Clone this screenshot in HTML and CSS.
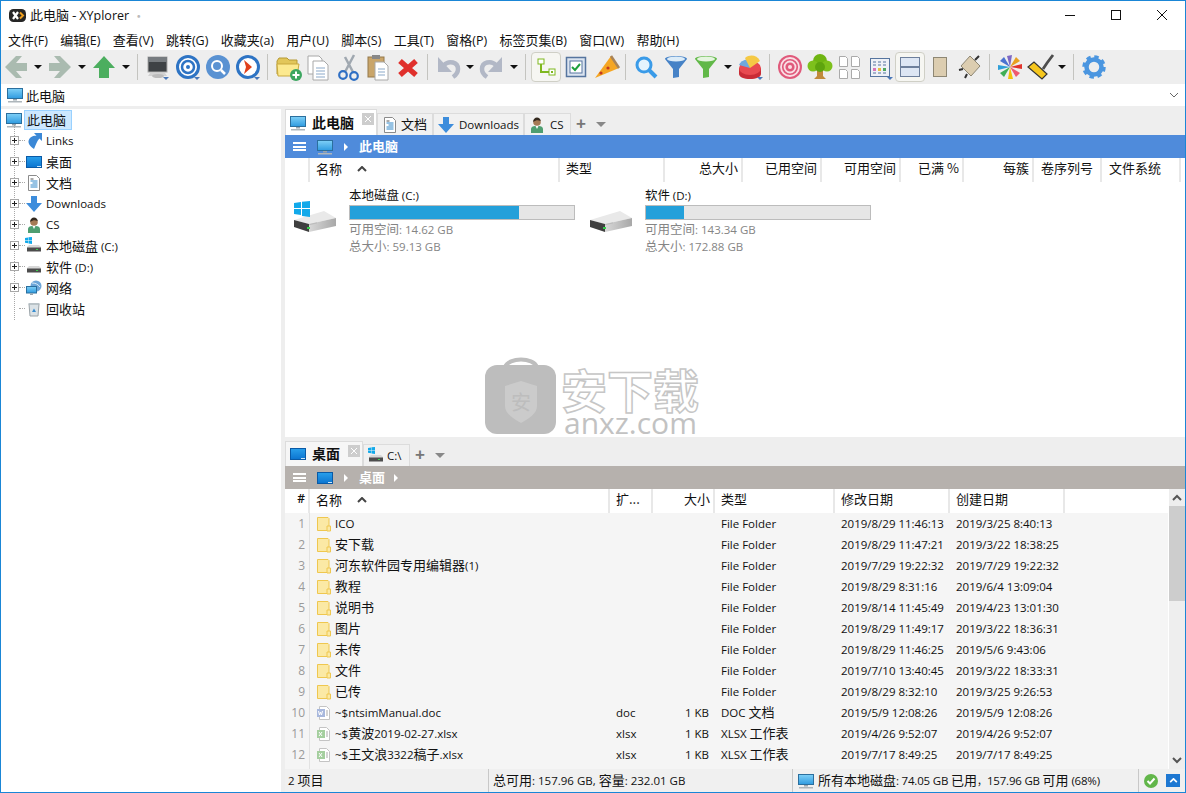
FILE: index.html
```html
<!DOCTYPE html>
<html lang="zh">
<head>
<meta charset="utf-8">
<title>XYplorer</title>
<link rel="stylesheet" href="styles.css">
</head>
<body>
<svg class="defs" width="0" height="0">
  <defs>
    <linearGradient id="scr" x1="0" y1="0" x2="0" y2="1"><stop offset="0" stop-color="#7fd0f7"/><stop offset="1" stop-color="#2f9be0"/></linearGradient>
    <linearGradient id="desk" x1="0" y1="0" x2="0" y2="1"><stop offset="0" stop-color="#29a0ec"/><stop offset="1" stop-color="#0b74d0"/></linearGradient>
    <linearGradient id="hdd" x1="0" y1="0" x2="1" y2="0"><stop offset="0" stop-color="#d8d8d8"/><stop offset="1" stop-color="#a8a8a8"/></linearGradient>
    <symbol id="pc" viewBox="0 0 16 16"><rect x="0.5" y="1.5" width="15" height="10" fill="url(#scr)" stroke="#2b6f9e"/><rect x="6" y="12" width="4" height="1.5" fill="#9aa5ad"/><rect x="1" y="14" width="14" height="1.5" fill="#aeb6bb"/></symbol>
    <symbol id="desktop" viewBox="0 0 16 16"><rect x="0.5" y="2.5" width="15" height="11" fill="url(#desk)" stroke="#0a5aa6"/><rect x="11" y="12" width="4" height="1" fill="#cfe8fa"/></symbol>
    <symbol id="doc" viewBox="0 0 16 16"><path d="M2.5.5h8l3 3v12h-11z" fill="#fff" stroke="#8b8b8b"/><path d="M4.500 6h7M6.500 8h5M4.500 10h7M4.500 12h7" stroke="#2f86c8"/><path d="M4.500 4h3" stroke="#555"/></symbol>
    <symbol id="down" viewBox="0 0 16 16"><path d="M5 0h6v7h5l-8 9-8-9h5z" fill="#3d8ddc"/></symbol>
    <symbol id="user" viewBox="0 0 16 16"><path d="M2 16v-4c0-2 2-3 4-3h4c2 0 4 1 4 3v4z" fill="#4f9e71"/><circle cx="8" cy="5" r="3.800" fill="#a67a55"/><path d="M4.200 5c0-3 1.800-4.500 3.800-4.500s3.500 1.200 3.700 3.500C9 3 7 3 4.200 5z" fill="#33291f"/><path d="M6.500 9l1.500 3 1.500-3z" fill="#fff"/></symbol>
    <symbol id="link" viewBox="0 0 16 16"><path d="M8 0h8v8l-2.600-2.600C11 8 10 11 8 16 2 12 1 8 4.500 4.500 6 3.200 8 2.800 10.500 2.800z" fill="#3b88d6"/></symbol>
    <symbol id="drive" viewBox="0 0 16 16"><path d="M1 9l2-2h10l2 2v4H1z" fill="#d8d8d8"/><rect x="1" y="9.500" width="14" height="4" fill="#4d4d4d"/><rect x="10" y="11" width="2" height="1" fill="#3ccf4e"/></symbol>
    <symbol id="win" viewBox="0 0 8 8"><path d="M0 1l3.500-.5v3H0zM4 .4L8 0v3.500H4zM0 4h3.500v3L0 6.500zM4 4h4v4l-4-.5z" fill="#12a9ea"/></symbol>
    <symbol id="net" viewBox="0 0 16 16"><circle cx="10" cy="6" r="5.500" fill="#6da6d8"/><path d="M6 3c3 0 6 1 8 4" stroke="#dcecf8" fill="none"/><rect x="0.500" y="6.500" width="10" height="6.500" fill="url(#scr)" stroke="#2b6f9e"/><rect x="4" y="13.500" width="3" height="1.500" fill="#9aa5ad"/></symbol>
    <symbol id="bin" viewBox="0 0 16 16"><path d="M3 3h10l-1 12H4z" fill="#dbe2e6" stroke="#9aa3a8"/><path d="M2.500 2h11v1.500h-11z" fill="#b9c2c7"/><path d="M6 11l2-3.500 2 3.500z" fill="#3a8ed0"/></symbol>
    <symbol id="folder" viewBox="0 0 16 16"><path d="M1.500 1.500h10.500l1 1v12h-11.500z" fill="#fbe9a5" stroke="#efc74f"/><path d="M11 10h3.500v5H11z" fill="#fbe9a5" stroke="#efc74f"/></symbol>
    <symbol id="fdoc" viewBox="0 0 16 16"><path d="M3.500 1.500h7l3 3v10h-10z" fill="#fff" stroke="#c4c4c4"/><rect x="1" y="4" width="8" height="8" fill="#a8b8dd"/><path d="M2.500 6l1 4 1-3 1 3 1-4" stroke="#fff" fill="none"/><path d="M10 6h2M10 8h2M10 10h2" stroke="#aaa"/></symbol>
    <symbol id="xdoc" viewBox="0 0 16 16"><path d="M3.500 1.500h7l3 3v10h-10z" fill="#fff" stroke="#c4c4c4"/><rect x="1" y="4" width="8" height="8" fill="#a5cf9f"/><path d="M3 6l3 4M6 6l-3 4" stroke="#fff"/><path d="M10 6h2M10 8h2M10 10h2" stroke="#aaa"/></symbol>
    <symbol id="hddbig" viewBox="0 0 46 30"><path d="M2 11L32 2l12 7-27 6z" fill="#e9e9e9"/><path d="M17 15l27-6v8l-27 6z" fill="url(#hdd)"/><path d="M2 11l15 4v8L2 18z" fill="#3f3f3f"/><path d="M17 15l8-1.800v1.200l-8 1.800z" fill="#bdbdbd"/><rect x="15" y="18" width="3" height="2" fill="#35d04a"/></symbol>
    <symbol id="tri" viewBox="0 0 8 4"><path d="M0 0h8L4 4z" fill="#111"/></symbol>
  </defs>
</svg>

<div class="window">
  <header class="titlebar">
    <svg class="app-logo" viewBox="0 0 17 13"><rect width="17" height="13" rx="4.500" fill="#262626"/><path d="M4 3l5 7M9 3l-5 7" stroke="#fff" stroke-width="2.200"/><path d="M11 3.500l3 3-3 3" fill="none" stroke="#f0a020" stroke-width="2"/></svg>
    <span class="title-text">此电脑 - <span class="lat-t">XYplorer</span></span>
    <span class="title-dot">·</span>
    <div class="win-ctrls">
      <svg class="wc" viewBox="0 0 46 20"><path d="M18 10.500h10" stroke="#111"/></svg>
      <svg class="wc" viewBox="0 0 46 20"><rect x="18.500" y="5.500" width="9" height="9" fill="none" stroke="#111"/></svg>
      <svg class="wc" viewBox="0 0 46 20"><path d="M18 5l10 10M28 5L18 15" stroke="#111"/></svg>
    </div>
  </header>

  <nav class="menubar">
    <span>文件<span class="lat">(F)</span></span><span>编辑<span class="lat">(E)</span></span><span>查看<span class="lat">(V)</span></span><span>跳转<span class="lat">(G)</span></span><span>收藏夹<span class="lat">(a)</span></span><span>用户<span class="lat">(U)</span></span><span>脚本<span class="lat">(S)</span></span><span>工具<span class="lat">(T)</span></span><span>窗格<span class="lat">(P)</span></span><span>标签页集<span class="lat">(B)</span></span><span>窗口<span class="lat">(W)</span></span><span>帮助<span class="lat">(H)</span></span>
  </nav>

  <div class="toolbar">
    <svg class="tb" viewBox="0 0 30 34"><path d="M4 17L15 6h6l-6 7h11v8H15l6 7h-6z" fill="#aabbb0"/></svg>
    <span class="dd"><svg class="tri"><use href="#tri"/></svg></span>
    <svg class="tb" viewBox="0 0 30 34"><path d="M26 17L15 6H9l6 7H4v8h11l-6 7h6z" fill="#aabbb0"/></svg>
    <span class="dd"><svg class="tri"><use href="#tri"/></svg></span>
    <svg class="tb" viewBox="0 0 30 34"><path d="M15 6l11 12h-6v10h-10V18H4z" fill="#4cae5f"/></svg>
    <span class="dd"><svg class="tri"><use href="#tri"/></svg></span>
    <span class="sep"></span>
    <svg class="tb" viewBox="0 0 30 34"><rect x="5" y="7" width="19" height="15" fill="#3e4245" stroke="#aaa"/><path d="M5 7h19v5H5z" fill="#777c80"/><path d="M7 23h15l2 3H5z" fill="#d2d2d2"/><ellipse cx="15" cy="26" rx="6" ry="2" fill="#bbb"/><path d="M20 27h6l-3 3z" fill="#4a78b8"/></svg>
    <svg class="tb" viewBox="0 0 30 34"><circle cx="15" cy="17" r="10.500" fill="#fff" stroke="#2e74c4" stroke-width="3"/><circle cx="15" cy="17" r="6" fill="none" stroke="#2e74c4" stroke-width="2.500"/><circle cx="15" cy="17" r="2" fill="#2e74c4"/><path d="M21 27h6l-3 3z" fill="#4a78b8"/></svg>
    <svg class="tb" viewBox="0 0 30 34"><circle cx="15" cy="17" r="12" fill="#5a92d2"/><circle cx="14" cy="16" r="5" fill="none" stroke="#fff" stroke-width="2"/><path d="M18 20l4 4" stroke="#fff" stroke-width="2.500"/></svg>
    <svg class="tb" viewBox="0 0 30 34"><circle cx="15" cy="17" r="10.500" fill="#fff" stroke="#2e74c4" stroke-width="3"/><path d="M11 10l8 7-8 7 2-7z" fill="#e0401c"/><path d="M21 27h6l-3 3z" fill="#4a78b8"/></svg>
    <span class="sep"></span>
    <svg class="tb" viewBox="0 0 30 34"><path d="M4 11l2-3h8l2 2h8v14H4z" fill="#e2c65a" stroke="#b69a34"/><path d="M4 14h22l-2 12H5z" fill="#fce98f" stroke="#c9a93e"/><circle cx="23" cy="25" r="6" fill="#3ca660"/><path d="M23 21.500v7M19.500 25h7" stroke="#fff" stroke-width="2"/></svg>
    <svg class="tb" viewBox="0 0 30 34"><path d="M5 6h11l3 3v15H5z" fill="#fff" stroke="#a8a8a8"/><path d="M10 11h11l4 4v15H10z" fill="#fff" stroke="#a8a8a8"/><path d="M13 18h9M13 21h9M13 24h9M13 27h9" stroke="#8ba9c9"/></svg>
    <svg class="tb" viewBox="0 0 30 34"><path d="M21 5l-9 17M12 7l8 15" stroke="#a0a8b0" stroke-width="2.500"/><circle cx="10" cy="25" r="3.800" fill="none" stroke="#2f6fc4" stroke-width="2.200"/><circle cx="21" cy="26" r="3.800" fill="none" stroke="#2f6fc4" stroke-width="2.200"/></svg>
    <svg class="tb" viewBox="0 0 30 34"><rect x="5" y="7" width="16" height="20" fill="#c9a56a" stroke="#94784a"/><rect x="9" y="5" width="8" height="4" fill="#888"/><path d="M12 12h9l4 4v14H12z" fill="#fff" stroke="#a8a8a8"/><path d="M15 19h7M15 22h7M15 25h7" stroke="#8ba9c9"/></svg>
    <svg class="tb" viewBox="0 0 30 34"><path d="M7 11l16 14M23 11L7 25" stroke="#e0302c" stroke-width="5.500"/></svg>
    <span class="sep"></span>
    <svg class="tb" viewBox="0 0 30 34"><path d="M5 7v15h14z" fill="#b2b8c6"/><path d="M11 15c5-5 14-3 14 4 0 3-2 6-5 8" fill="none" stroke="#b2b8c6" stroke-width="4.500"/></svg>
    <span class="dd"><svg class="tri"><use href="#tri"/></svg></span>
    <svg class="tb" viewBox="0 0 30 34"><path d="M25 7v15H11z" fill="#b2b8c6"/><path d="M19 15c-5-5-14-3-14 4 0 3 2 6 5 8" fill="none" stroke="#b2b8c6" stroke-width="4.500"/></svg>
    <span class="dd"><svg class="tri"><use href="#tri"/></svg></span>
    <span class="sep"></span>
    <span class="tb-on"><svg class="tb" viewBox="0 0 30 34"><rect x="7" y="9" width="6" height="5" fill="#fff" stroke="#7fb81e"/><path d="M10 14v8h8" fill="none" stroke="#7fb81e" stroke-width="2"/><rect x="18" y="19" width="6" height="6" fill="#fff" stroke="#7fb81e"/><rect x="20" y="21" width="2" height="2" fill="#7fb81e"/></svg></span>
    <svg class="tb" viewBox="0 0 30 34"><rect x="5.500" y="7.500" width="19" height="19" fill="#dbe4f0" stroke="#56759f" stroke-width="1.500"/><rect x="9" y="11" width="12" height="12" fill="#fff" stroke="#56759f"/><path d="M11 17l3 3 5-6" fill="none" stroke="#1fa03c" stroke-width="2"/></svg>
    <svg class="tb" viewBox="0 0 30 34"><path d="M4 28L20 6l8 12z" fill="#f5a623"/><path d="M20 6l8 12" stroke="#a98458" stroke-width="2.500"/><circle cx="17" cy="18" r="1.600" fill="#c43a20"/><circle cx="10" cy="23" r="1.600" fill="#c43a20"/></svg>
    <span class="sep"></span>
    <svg class="tb" viewBox="0 0 30 34"><circle cx="13" cy="15" r="7" fill="#e4f3fd" stroke="#3a9be8" stroke-width="3"/><path d="M18 20l7 7" stroke="#3a9be8" stroke-width="4"/></svg>
    <svg class="tb" viewBox="0 0 30 34"><path d="M4 9c0-4 22-4 22 0l-8 10v8l-6 1V19z" fill="#4682c6"/><ellipse cx="15" cy="9" rx="9" ry="2.500" fill="#dcecf8"/></svg>
    <svg class="tb" viewBox="0 0 30 34"><path d="M4 9c0-4 22-4 22 0l-8 10v8l-6 1V19z" fill="#61b848"/><ellipse cx="15" cy="9" rx="9" ry="2.500" fill="#e5f5df"/></svg>
    <span class="dd"><svg class="tri"><use href="#tri"/></svg></span>
    <svg class="tb" viewBox="0 0 30 34"><path d="M4 18v6c0 3 5 5 11 5s11-2 11-5v-6z" fill="#c92c36"/><ellipse cx="15" cy="18" rx="11" ry="7" fill="#e84a50"/><path d="M15 18L4 15c1-3 4-5 9-6z" fill="#6fa8dc"/><path d="M15 18L10 8c5-4 12-3 15 3z" fill="#f5c945"/><path d="M22 27h6l-3 3z" fill="#4a78b8"/></svg>
    <span class="sep"></span>
    <svg class="tb" viewBox="0 0 30 34"><circle cx="15" cy="17" r="12" fill="#e05a7b"/><circle cx="15" cy="17" r="9" fill="none" stroke="#f9dfe5" stroke-width="1.800"/><circle cx="15" cy="17" r="5.500" fill="none" stroke="#f9dfe5" stroke-width="1.800"/><circle cx="15" cy="17" r="2" fill="#f9dfe5"/></svg>
    <svg class="tb" viewBox="0 0 30 34"><path d="M12 20h6v6l3 3H9l3-3z" fill="#c08a3a"/><circle cx="15" cy="11" r="7" fill="#6fb512"/><circle cx="8" cy="16" r="5.500" fill="#7dc01c"/><circle cx="22" cy="16" r="5.500" fill="#7dc01c"/><circle cx="15" cy="17" r="5" fill="#5ea40e"/></svg>
    <svg class="tb" viewBox="0 0 30 34"><g fill="#fff" stroke="#aaa"><path d="M4.500 6.500h6l2 2v8h-8z"/><path d="M16.500 6.500h6l2 2v8h-8z"/><path d="M4.500 19.500h6l2 2v7h-8z"/><path d="M16.500 19.500h6l2 2v7h-8z"/></g></svg>
    <svg class="tb" viewBox="0 0 30 34"><rect x="5.500" y="8.500" width="19" height="18" fill="#eef1f7" stroke="#56759f"/><path d="M8 12h3M13 12h3M18 12h3M8 15h3M13 15h3M18 15h3" stroke="#56759f"/><rect x="8" y="18" width="3" height="3" fill="#d977b8"/><rect x="13" y="18" width="3" height="3" fill="#e8c040"/><rect x="18" y="18" width="3" height="3" fill="#50a860"/><path d="M8 23h3M13 23h3M18 23h3" stroke="#56759f"/><path d="M22 27h6l-3 3z" fill="#4a78b8"/></svg>
    <span class="tb-on"><svg class="tb" viewBox="0 0 30 34"><rect x="5.500" y="7.500" width="19" height="9" fill="#dde6f4" stroke="#6d7f9c"/><rect x="5.500" y="17.500" width="19" height="9" fill="#dde6f4" stroke="#6d7f9c"/></svg></span>
    <svg class="tb" viewBox="0 0 30 34"><rect x="8.500" y="7.500" width="13" height="19" fill="#dccdb0" stroke="#8e8774"/></svg>
    <svg class="tb" viewBox="0 0 30 34"><path d="M15 6l10 10-9 10-10-10z" fill="#dccdb0" stroke="#8e8774"/><path d="M20 10l4-4M8 19l-4 1M12 24l-2 4" stroke="#333" stroke-width="2"/></svg>
    <span class="sep"></span>
    <svg class="tb" viewBox="0 0 30 34"><path d="M15 17L12 6l5-1z" fill="#7d68c4"/><path d="M15 17l6-10 4 4z" fill="#e8a020"/><path d="M15 17l12-3 0 5z" fill="#e2342c"/><path d="M15 17l10 6-4 4z" fill="#ef5a70"/><path d="M15 17l3 12-5 0z" fill="#f2c20a"/><path d="M15 17l-6 10-4-4z" fill="#3fae55"/><path d="M15 17L3 20l0-5z" fill="#2f9fd8"/><path d="M15 17L5 11l4-4z" fill="#4a72d0"/></svg>
    <svg class="tb" viewBox="0 0 30 34"><path d="M3 17l6-5 13 12-5 5z" fill="#f6c71e" stroke="#333" stroke-width="1.200"/><path d="M18 19l4-6 6-8" fill="none" stroke="#4d4d4d" stroke-width="2.800"/></svg>
    <span class="dd"><svg class="tri"><use href="#tri"/></svg></span>
    <span class="sep"></span>
    <svg class="tb" viewBox="0 0 30 34"><circle cx="15" cy="17" r="7.500" fill="none" stroke="#4b96e0" stroke-width="4.500"/><circle cx="15" cy="17" r="10" fill="none" stroke="#4b96e0" stroke-width="3.500" stroke-dasharray="4.300 3.550"/></svg>
  </div>

  <div class="addrbar">
    <svg class="ic16"><use href="#pc"/></svg>
    <span class="addr-text">此电脑</span>
    <svg class="addr-chev" viewBox="0 0 10 6"><path d="M1 1l4 4 4-4" fill="none" stroke="#666"/></svg>
  </div>

  <div class="main">
    <aside class="tree">
      <div class="tree-root"><svg class="ic16"><use href="#pc"/></svg><span class="sel">此电脑</span></div>
      <div class="tree-kids">
        <div class="node"><i class="exp"></i><span class="ni"><svg class="ic16"><use href="#link"/></svg></span><span class="lat">Links</span></div>
        <div class="node"><i class="exp"></i><span class="ni"><svg class="ic16"><use href="#desktop"/></svg></span><span>桌面</span></div>
        <div class="node"><i class="exp"></i><span class="ni"><svg class="ic16"><use href="#doc"/></svg></span><span>文档</span></div>
        <div class="node"><i class="exp"></i><span class="ni"><svg class="ic16"><use href="#down"/></svg></span><span class="lat">Downloads</span></div>
        <div class="node"><i class="exp"></i><span class="ni"><svg class="ic16"><use href="#user"/></svg></span><span class="lat">CS</span></div>
        <div class="node"><i class="exp"></i><span class="ni"><svg class="ic16"><use href="#drive"/></svg><svg class="win-mini"><use href="#win"/></svg></span><span>本地磁盘 <span class="lat">(C:)</span></span></div>
        <div class="node"><i class="exp"></i><span class="ni"><svg class="ic16"><use href="#drive"/></svg></span><span>软件 <span class="lat">(D:)</span></span></div>
        <div class="node"><i class="exp"></i><span class="ni"><svg class="ic16"><use href="#net"/></svg></span><span>网络</span></div>
        <div class="node last"><i class="noexp"></i><span class="ni"><svg class="ic16"><use href="#bin"/></svg></span><span>回收站</span></div>
      </div>
    </aside>
    <div class="splitter"></div>
    <section class="panes">
      <div class="pane-top">
        <div class="tabs">
          <div class="tab active t1"><svg class="ic16"><use href="#pc"/></svg><b>此电脑</b><span class="tab-x"><svg viewBox="0 0 8 8"><path d="M1 1l6 6M7 1L1 7" stroke="#fff"/></svg></span></div>
          <div class="tab t2"><svg class="ic16"><use href="#doc"/></svg><span class="tt">文档</span></div>
          <div class="tab t3"><svg class="ic16"><use href="#down"/></svg><span class="lat">Downloads</span></div>
          <div class="tab t4"><svg class="ic16"><use href="#user"/></svg><span class="lat">CS</span></div>
          <span class="tab-add">+</span>
          <svg class="tab-more" viewBox="0 0 10 5"><path d="M0 0h10L5 5z" fill="#888"/></svg>
        </div>
        <div class="crumb blue">
          <span class="burger"></span>
          <svg class="ic16"><use href="#pc"/></svg>
          <svg class="arrow" viewBox="0 0 4 8"><path d="M0 0l4 4-4 4z" fill="#fff"/></svg>
          <b class="crumb-t">此电脑</b>
        </div>
        <div class="hdr hdr-top">
          <span class="h hnum"></span>
          <span class="h hname">名称<svg class="sort" viewBox="0 0 10 6"><path d="M1 5l4-4 4 4" fill="none" stroke="#444" stroke-width="2"/></svg></span>
          <span class="h">类型</span>
          <span class="h r">总大小</span>
          <span class="h r">已用空间</span>
          <span class="h r">可用空间</span>
          <span class="h r">已满 %</span>
          <span class="h r">每簇</span>
          <span class="h l7">卷序列号</span>
          <span class="h l7">文件系统</span>
          <span class="h end"></span>
        </div>
        <div class="drives">
          <div class="drive">
            <span class="drive-ic"><svg class="hdd"><use href="#hddbig"/></svg><svg class="win-big"><use href="#win"/></svg></span>
            <div class="drive-info">
              <div class="d-name">本地磁盘 <span class="lat">(C:)</span></div>
              <div class="bar"><div class="fill" style="width:75.5%"></div></div>
              <div class="d-sub">可用空间<span class="lat">: 14.62 GB</span></div>
              <div class="d-sub">总大小<span class="lat">: 59.13 GB</span></div>
            </div>
          </div>
          <div class="drive">
            <span class="drive-ic"><svg class="hdd"><use href="#hddbig"/></svg></span>
            <div class="drive-info">
              <div class="d-name">软件 <span class="lat">(D:)</span></div>
              <div class="bar"><div class="fill" style="width:17%"></div></div>
              <div class="d-sub">可用空间<span class="lat">: 143.34 GB</span></div>
              <div class="d-sub">总大小<span class="lat">: 172.88 GB</span></div>
            </div>
          </div>
        </div>
        <div class="wm">
          <div class="wm-mark">
            <svg class="wm-bag" viewBox="0 0 72 80"><path d="M20 12C24 2 48 2 52 12" fill="none" stroke="#bdbdbd" stroke-width="4"/><rect x="0" y="10" width="71" height="69" rx="12" fill="#bdbdbd"/><path d="M20 31l16-5 16 5v20c0 8-9 13-16 17-7-4-16-9-16-17z" fill="#cbcbcb"/></svg>
            <span class="wm-seal">安</span>
          </div>
          <div class="wm-text"><span class="wm-cn">安下载</span><span class="wm-en">anxz.com</span></div>
        </div>
      </div>

      <div class="pane-bottom">
        <div class="tabs low">
          <div class="tab active t5"><svg class="ic16"><use href="#desktop"/></svg><b>桌面</b><span class="tab-x"><svg viewBox="0 0 8 8"><path d="M1 1l6 6M7 1L1 7" stroke="#fff"/></svg></span></div>
          <div class="tab t6"><span class="ni-s"><svg class="ic16"><use href="#drive"/></svg><svg class="win-mini"><use href="#win"/></svg></span><span class="lat">C:\</span></div>
          <span class="tab-add">+</span>
          <svg class="tab-more" viewBox="0 0 10 5"><path d="M0 0h10L5 5z" fill="#888"/></svg>
        </div>
        <div class="crumb grey">
          <span class="burger"></span>
          <svg class="ic16"><use href="#desktop"/></svg>
          <svg class="arrow" viewBox="0 0 4 8"><path d="M0 0l4 4-4 4z" fill="#fff"/></svg>
          <b class="crumb-t">桌面</b>
          <svg class="arrow a2" viewBox="0 0 4 8"><path d="M0 0l4 4-4 4z" fill="#fff"/></svg>
        </div>
        <div class="list-wrap">
          <div class="list-main">
            <div class="hdr hdr-low">
              <span class="h hnum">#</span>
              <span class="h hname">名称<svg class="sort" viewBox="0 0 10 6"><path d="M1 5l4-4 4 4" fill="none" stroke="#444" stroke-width="2"/></svg></span>
              <span class="h">扩...</span>
              <span class="h r">大小</span>
              <span class="h">类型</span>
              <span class="h">修改日期</span>
              <span class="h">创建日期</span>
              <span class="h end"></span>
            </div>
            <div class="rows">
              <div class="row"><span class="c-n">1</span><span class="c-name"><svg class="ic16"><use href="#folder"/></svg><span class="lat">ICO</span></span><span></span><span></span><span class="lat">File Folder</span><span class="lat">2019/8/29 11:46:13</span><span class="lat">2019/3/25 8:40:13</span></div>
              <div class="row"><span class="c-n">2</span><span class="c-name"><svg class="ic16"><use href="#folder"/></svg><span class="cn">安下载</span></span><span></span><span></span><span class="lat">File Folder</span><span class="lat">2019/8/29 11:47:21</span><span class="lat">2019/3/22 18:38:25</span></div>
              <div class="row"><span class="c-n">3</span><span class="c-name"><svg class="ic16"><use href="#folder"/></svg><span class="cn">河东软件园专用编辑器<span class="lat">(1)</span></span></span><span></span><span></span><span class="lat">File Folder</span><span class="lat">2019/7/29 19:22:32</span><span class="lat">2019/7/29 19:22:32</span></div>
              <div class="row"><span class="c-n">4</span><span class="c-name"><svg class="ic16"><use href="#folder"/></svg><span class="cn">教程</span></span><span></span><span></span><span class="lat">File Folder</span><span class="lat">2019/8/29 8:31:16</span><span class="lat">2019/6/4 13:09:04</span></div>
              <div class="row"><span class="c-n">5</span><span class="c-name"><svg class="ic16"><use href="#folder"/></svg><span class="cn">说明书</span></span><span></span><span></span><span class="lat">File Folder</span><span class="lat">2019/8/14 11:45:49</span><span class="lat">2019/4/23 13:01:30</span></div>
              <div class="row"><span class="c-n">6</span><span class="c-name"><svg class="ic16"><use href="#folder"/></svg><span class="cn">图片</span></span><span></span><span></span><span class="lat">File Folder</span><span class="lat">2019/8/29 11:49:17</span><span class="lat">2019/3/22 18:36:31</span></div>
              <div class="row"><span class="c-n">7</span><span class="c-name"><svg class="ic16"><use href="#folder"/></svg><span class="cn">未传</span></span><span></span><span></span><span class="lat">File Folder</span><span class="lat">2019/8/29 11:46:25</span><span class="lat">2019/5/6 9:43:06</span></div>
              <div class="row"><span class="c-n">8</span><span class="c-name"><svg class="ic16"><use href="#folder"/></svg><span class="cn">文件</span></span><span></span><span></span><span class="lat">File Folder</span><span class="lat">2019/7/10 13:40:45</span><span class="lat">2019/3/22 18:33:31</span></div>
              <div class="row"><span class="c-n">9</span><span class="c-name"><svg class="ic16"><use href="#folder"/></svg><span class="cn">已传</span></span><span></span><span></span><span class="lat">File Folder</span><span class="lat">2019/8/29 8:32:10</span><span class="lat">2019/3/25 9:26:53</span></div>
              <div class="row"><span class="c-n">10</span><span class="c-name"><svg class="ic16"><use href="#fdoc"/></svg><span class="lat">~$ntsimManual.doc</span></span><span class="lat">doc</span><span class="lat r">1 KB</span><span class="cn"><span class="lat">DOC</span> 文档</span><span class="lat">2019/5/9 12:08:26</span><span class="lat">2019/5/9 12:08:26</span></div>
              <div class="row"><span class="c-n">11</span><span class="c-name"><svg class="ic16"><use href="#xdoc"/></svg><span class="cn"><span class="lat">~$</span>黄波<span class="lat">2019-02-27.xlsx</span></span></span><span class="lat">xlsx</span><span class="lat r">1 KB</span><span class="cn"><span class="lat">XLSX</span> 工作表</span><span class="lat">2019/4/26 9:52:07</span><span class="lat">2019/4/26 9:52:07</span></div>
              <div class="row"><span class="c-n">12</span><span class="c-name"><svg class="ic16"><use href="#xdoc"/></svg><span class="cn"><span class="lat">~$</span>王文浪<span class="lat">3322</span>稿子<span class="lat">.xlsx</span></span></span><span class="lat">xlsx</span><span class="lat r">1 KB</span><span class="cn"><span class="lat">XLSX</span> 工作表</span><span class="lat">2019/7/17 8:49:25</span><span class="lat">2019/7/17 8:49:25</span></div>
              <div class="row"><span class="c-n"></span><span class="c-name"><svg class="ic16"><use href="#fdoc"/></svg></span></div>
            </div>
          </div>
          <div class="vscroll">
            <span class="vbtn"><svg viewBox="0 0 10 7"><path d="M1 6l4-4 4 4" fill="none" stroke="#555" stroke-width="2"/></svg></span>
            <span class="vthumb"></span>
            <span class="vspace"></span>
            <span class="vbtn"><svg viewBox="0 0 10 7"><path d="M1 1l4 4 4-4" fill="none" stroke="#555" stroke-width="2"/></svg></span>
          </div>
        </div>
      </div>

      <footer class="status">
        <span class="st st1"><span class="st-t"><span class="lat">2 </span>项目</span></span>
        <span class="st st2"><span class="st-t">总可用<span class="lat">: 157.96 GB, </span>容量<span class="lat">: 232.01 GB</span></span></span>
        <span class="st st3"><svg class="ic16"><use href="#pc"/></svg><span class="st-t">所有本地磁盘<span class="lat">: 74.05 GB </span>已用<span class="comma">，</span><span class="lat">157.96 GB </span>可用<span class="lat"> (68%)</span></span></span>
        <span class="st st4">
          <svg class="ok" viewBox="0 0 14 14"><circle cx="7" cy="7" r="7" fill="#62b64a"/><path d="M3.500 7l2.500 2.500 4.500-5" fill="none" stroke="#fff" stroke-width="2"/></svg>
          <span class="up"><svg viewBox="0 0 10 6"><path d="M1 5l4-4 4 4" fill="none" stroke="#fff" stroke-width="2"/></svg></span>
        </span>
      </footer>
    </section>
  </div>
</div>
</body>
</html>
```

FILE: styles.css
```css
* { box-sizing: border-box; }
html, body { margin: 0; padding: 0; }
body {
  width: 1186px;
  height: 793px;
  overflow: hidden;
  background: #fff;
  color: #111;
  font-family: "Noto Sans CJK SC", "Open Sans", sans-serif;
  font-size: 13px;
  line-height: 1;
}
svg { display: block; flex: none; }
.defs { position: absolute; }
.lat { font-family: "Open Sans", "Noto Sans CJK SC", sans-serif; font-size: 11.5px; white-space: pre; }
.lat-t { font-family: "Open Sans", sans-serif; font-size: 12.5px; }
.r { text-align: right; }
.ic16 { width: 16px; height: 16px; }

.window {
  width: 1186px;
  height: 793px;
  border: 1px solid #1a86d6;
  display: flex;
  flex-direction: column;
  background: #fff;
}

.titlebar { height: 28px; display: flex; align-items: center; padding-left: 8px; flex: none; }
.app-logo { width: 17px; height: 13px; margin-right: 4px; }
.title-text { font-size: 13px; }
.title-dot { color: #bbb; margin-left: 3px; }
.win-ctrls { margin-left: auto; display: flex; }
.wc { width: 46px; height: 20px; }

.menubar { height: 21px; flex: none; display: flex; align-items: center; gap: 12.3px; padding: 1px 0 0 7px; font-size: 13px; }
.menubar span { white-space: nowrap; }
.menubar .lat { font-size: 12.5px; }

.toolbar { height: 34px; flex: none; background: #eeeeee; display: flex; align-items: center; }
.tb { width: 30px; height: 34px; }
.dd { width: 14px; height: 34px; display: flex; align-items: center; justify-content: center; }
.tri { width: 8px; height: 4px; }
.sep { width: 10px; height: 34px; }
.sep::after { content: ""; display: block; width: 1px; height: 26px; background: #c4c4c0; margin: 4px 0 0 4px; }
.tb-on { width: 30px; height: 30px; border: 1px solid #cfcfc6; border-radius: 4px; background: #f6f6f2; display: flex; align-items: center; justify-content: center; overflow: hidden; }
.tb-on .tb { margin: 0 -1px; }

.addrbar { height: 22px; flex: none; display: flex; align-items: center; padding-left: 6px; gap: 3px; }
.addr-text { font-size: 13px; }
.addr-chev { width: 10px; height: 6px; margin-left: auto; margin-right: 6px; }

.main { flex: 1; min-height: 0; display: flex; border-top: 3px solid #eeeeee; }

.tree { width: 280px; flex: none; background: #fff; padding-top: 1px; overflow: hidden; }
.tree-root { height: 20px; display: flex; align-items: center; padding-left: 5px; gap: 2px; }
.sel { background: #cce8ff; border: 1px solid #99d1ff; height: 20px; line-height: 18px; padding: 0 2px; width: 48px; white-space: nowrap; }
.tree-kids { position: relative; }
.tree-kids::before { content: ""; position: absolute; left: 13px; top: -5px; height: 195px; border-left: 1px dotted #a8a8a8; }
.node { height: 21px; display: flex; align-items: center; position: relative; padding-left: 9px; }
.exp { width: 9px; height: 9px; border: 1px solid #a8a8a8; background: #fff; position: relative; flex: none; z-index: 1; }
.exp::before { content: ""; position: absolute; left: 1px; top: 3px; width: 5px; height: 1px; background: #222; }
.exp::after { content: ""; position: absolute; left: 3px; top: 1px; width: 1px; height: 5px; background: #222; }
.noexp { width: 9px; height: 1px; flex: none; }
.ni { width: 18px; height: 16px; margin: 0 3px 0 6px; position: relative; display: block; flex: none; }
.ni .ic16 { margin-left: 1px; }
.node::after { content: ""; position: absolute; left: 18px; top: 10px; width: 6px; border-top: 1px dotted #a8a8a8; }
.win-mini { position: absolute; left: 0; top: -1px; width: 7px; height: 7px; }
.ni-s { position: relative; width: 16px; height: 16px; display: block; }

.splitter { width: 4px; flex: none; background: #eeeeee; }
.panes { flex: 1; min-width: 0; display: flex; flex-direction: column; }
.pane-top { height: 328px; flex: none; position: relative; display: flex; flex-direction: column; }
.pane-bottom { flex: 1; min-height: 0; display: flex; flex-direction: column; overflow: hidden; }

.tabs { height: 26px; flex: none; background: #eeeeee; display: flex; align-items: flex-end; }
.tabs.low { height: 29px; }
.tab { height: 22px; display: flex; align-items: center; gap: 3px; border: 1px solid #dcdcdc; border-bottom: 0; background: #f1f1f1; padding-left: 4px; white-space: nowrap; position: relative; }
.t3, .t4 { gap: 5px; }
.tab.active { background: #fff; height: 26px; padding-left: 4px; gap: 6px; }
.low .tab.active { height: 25px; }
.tab b { font-weight: 700; font-size: 14px; margin-bottom: 2px; }
.tt { margin-bottom: 2px; }
.tab-x { position: absolute; right: 2px; top: 3px; width: 12px; height: 12px; background: #cdcdcd; display: flex; align-items: center; justify-content: center; }
.tab-x svg { width: 8px; height: 8px; }
.t1 { width: 92px; }
.t2 { width: 56px; }
.t3 { width: 91px; }
.t4 { width: 47px; }
.t5 { width: 78px; background: #f6f6f6 !important; }
.t6 { width: 47px; }
.tab-add { color: #777; font-family: "Liberation Sans", sans-serif; font-size: 17px; font-weight: 700; width: 20px; text-align: center; height: 22px; line-height: 21px; }
.tab-more { width: 10px; height: 5px; margin: 0 0 8px 5px; }

.crumb { height: 23px; flex: none; display: flex; align-items: center; padding-left: 8px; color: #fff; }
.crumb.blue { background: #4f8bdb; }
.crumb.grey { background: #b6b1ad; }
.burger { width: 13px; height: 9px; border-top: 2px solid #fff; border-bottom: 2px solid #fff; position: relative; margin-right: 11px; }
.burger::after { content: ""; position: absolute; left: 0; right: 0; top: 1.500px; height: 2px; background: #fff; }
.arrow { width: 4px; height: 8px; margin-left: 11px; }
.a2 { margin-left: 9px; }
.crumb-t { margin: 0 0 2px 11px; font-weight: 700; }

.hdr { display: grid; height: 24px; flex: none; background: #fff; align-items: stretch; }
.hdr-top { grid-template-columns: 25px 250px 105px 78px 79px 79px 63px 70px 68px 79px 1fr; }
.hdr-low { grid-template-columns: 25px 300px 43px 62px 120px 115px 115px 1fr; }
.h { border-right: 2px solid #e8e8e8; padding: 0 3px 0 6px; line-height: 20px; white-space: nowrap; }
.h.l7 { padding-left: 7px; }
.h.end { border: 0; }
.hnum { padding: 0 3px 0 0; text-align: right; font-family: "Open Sans", sans-serif; font-size: 12px; font-weight: 600; }
.hname { display: flex; align-items: center; gap: 15px; padding-bottom: 2px; }
.sort { width: 10px; height: 6px; }

.drives { flex: 1; background: #fff; display: flex; padding: 6px 0 0 7px; }
.drive { width: 296px; display: flex; flex: none; }
.drive-ic { width: 46px; height: 50px; position: relative; margin-top: 7px; margin-right: 11px; flex: none; }
.hdd { width: 46px; height: 30px; position: absolute; left: 0; top: 14px; }
.win-big { width: 16px; height: 16px; position: absolute; left: 2px; top: 6px; }
.drive-info { width: 226px; }
.d-name { height: 17px; line-height: 14px; font-size: 12.5px; }
.bar { height: 15px; border: 1px solid #bcbcbc; background: #e6e6e6; }
.fill { height: 100%; background: #24a0da; }
.d-sub { color: #858585; height: 17px; line-height: 16px; font-size: 12.5px; }
.bar + .d-sub { margin-top: 1px; }

.wm { position: absolute; left: 200px; top: 246px; display: flex; gap: 4px; }
.wm-mark { width: 72px; height: 80px; position: relative; }
.wm-bag { width: 72px; height: 80px; }
.wm-seal { position: absolute; left: 26px; top: 37px; font-size: 20px; color: #bdbdbd; line-height: 20px; }
.wm-text { display: flex; flex-direction: column; width: 140px; padding-top: 12px; }
.wm-cn { font-size: 46px; line-height: 42px; color: #fff; font-weight: 700; -webkit-text-stroke: 1.500px #c6c6c6; white-space: nowrap; }
.wm-en { font-family: "Open Sans", sans-serif; font-size: 30px; line-height: 24px; color: #c2c2c2; white-space: nowrap; margin: 2px 0 0 3px; }

.list-wrap { flex: 1; min-height: 0; display: flex; }
.list-main { width: 884px; flex: none; display: flex; flex-direction: column; border-right: 1px solid #fff; }
.rows { flex: 1; min-height: 0; background: #f5f5f5; overflow: hidden; }
.row { height: 21px; display: grid; grid-template-columns: 25px 300px 43px 62px 120px 115px 115px; align-items: center; white-space: nowrap; }
.row > span { padding-left: 6px; }
.row > .r { padding: 0 6px 0 0; }
.row > .cn { padding-bottom: 2px; }
.c-name .cn { margin-bottom: 2px; }
.c-n { color: #9a9a9a; text-align: right; font-family: "Open Sans", sans-serif; font-size: 12px; height: 21px; line-height: 22px; padding: 0 4px 0 0 !important; border-right: 1px solid #e2e2e2; }
.c-name { display: flex; align-items: center; gap: 3px; }

.vscroll { width: 16px; flex: none; background: #eeeeee; display: flex; flex-direction: column; }
.vbtn { height: 17px; display: flex; align-items: center; justify-content: center; flex: none; }
.vbtn svg { width: 10px; height: 7px; }
.vthumb { height: 95px; background: #cdcdcd; flex: none; }
.vspace { flex: 1; }

.status { height: 23px; flex: none; background: #f0f0f0; display: flex; align-items: center; }
.st { height: 100%; display: flex; align-items: center; white-space: pre; flex: none; }
.st-t { margin-bottom: 2px; }
.st1 { width: 204px; padding-left: 3px; border-right: 1px solid #c8c8c8; }
.st2 { width: 304px; padding-left: 4px; border-right: 1px solid #c8c8c8; }
.st3 { width: 346px; padding-left: 5px; border-right: 1px solid #c8c8c8; }
.st3 .ic16 { margin-right: 4px; }
.st3 .lat { letter-spacing: -0.2px; }
.comma { font-size: 10px; }
.st4 { flex: 1; padding-left: 5px; gap: 8px; }
.ok { width: 14px; height: 14px; }
.up { width: 14px; height: 13px; background: #1e78d2; display: flex; align-items: center; justify-content: center; }
.up svg { width: 9px; height: 5px; }
```
